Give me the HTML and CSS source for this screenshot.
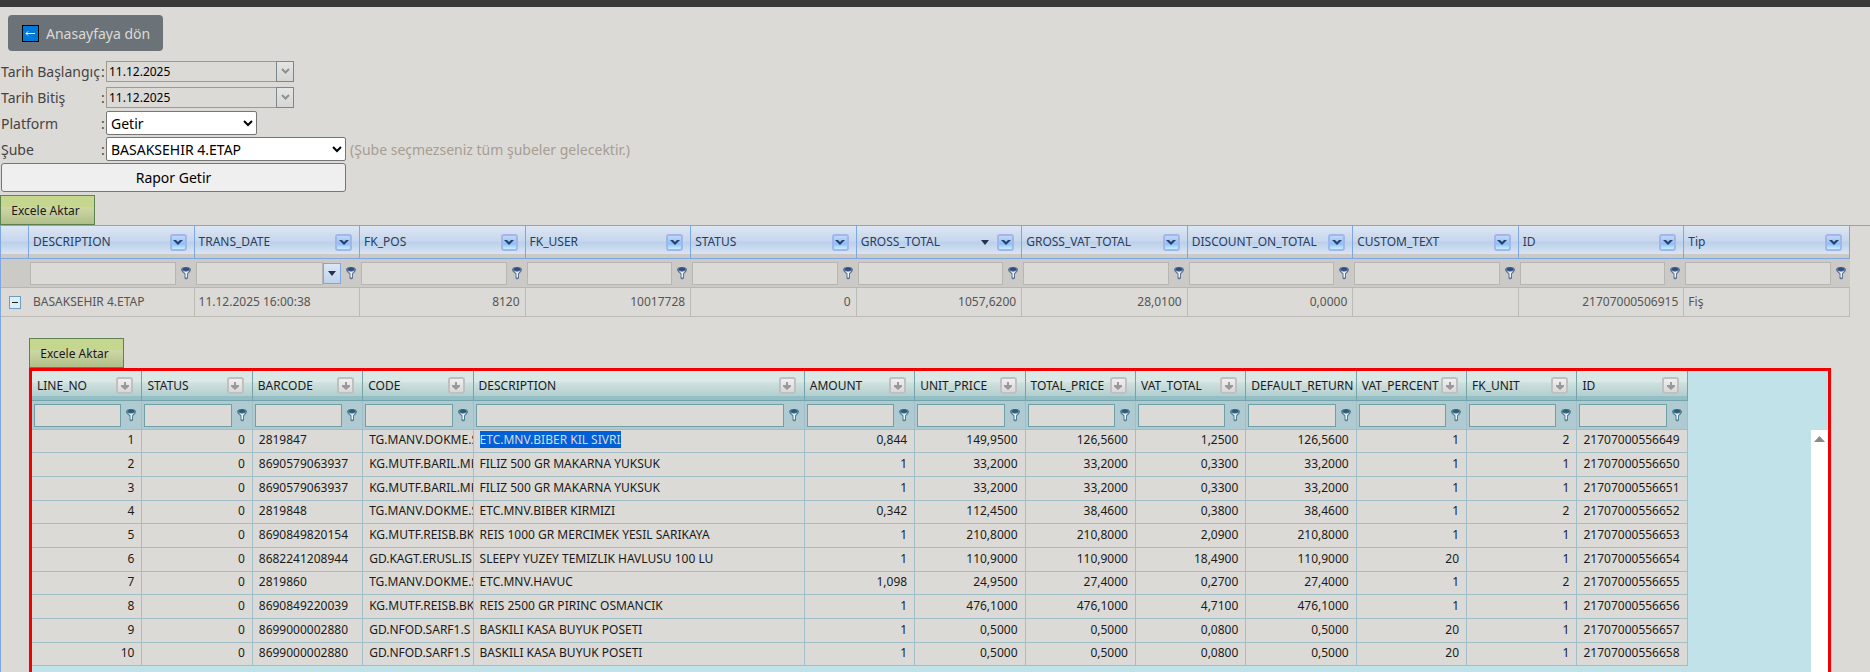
FILE: index.html
```html
<!DOCTYPE html>
<html lang="tr">
<head>
    <meta charset="UTF-8">
    <meta name="viewport" content="width=device-width, initial-scale=1.0">
    <title>Rapor</title>
    <link rel="stylesheet" href="styles.css">
</head>
<body>
    <svg class="symbols" aria-hidden="true">
        <symbol id="filter" viewBox="0 0 12 14">
            <path d="M1 3.500 C1 .2 11 .2 11 3.500 C11 6 8 7 8 8.500 V12.500 L6 13.500 L4.500 12.500 V8.500 C4.500 7 1 6 1 3.500Z" fill="currentColor" opacity=".7"/>
            <path d="M2.500 4.500 C4 6 8 6 9.500 4.500 L7 7.500 V11.500 H5.500 V7.500Z" fill="#e8f2fa"/>
            <ellipse cx="6" cy="3" rx="3" ry="1.800" fill="currentColor"/>
        </symbol>
        <symbol id="chevron" viewBox="0 0 10 7">
            <path d="M0 1 H3 L5 3 L7 1 H10 L5 6Z" fill="currentColor"/>
        </symbol>
        <symbol id="arrow" viewBox="0 0 10 10">
            <path d="M4 1 H6 V4 H9 V5.500 L5 9 L1 5.500 V4 H4Z" fill="currentColor"/>
        </symbol>
    </svg>
    <div class="topbar"></div>
    <a class="btn-home" href="#">
        <svg width="17" height="17" viewBox="0 0 17 17"><rect x=".5" y=".5" width="16" height="16" fill="#0078d7" stroke="#000"/><path d="M4 8.500H13M6 6.500L4 8.500L6 10.500" fill="none" stroke="#fff"/></svg>
        Anasayfaya dön
    </a>
    <form class="filters">
        <label for="start">Tarih Başlangıç</label><span>:</span>
        <div class="date-edit">
            <input type="text" id="start" value="11.12.2025">
            <button type="button" aria-label="Tarih seç"><svg width="9" height="6"><path d="M1 1L4.500 4.500L8 1" fill="none" stroke="#8f8f8f" stroke-width="2"/></svg></button>
        </div>
        <label for="end">Tarih Bitiş</label><span>:</span>
        <div class="date-edit">
            <input type="text" id="end" value="11.12.2025">
            <button type="button" aria-label="Tarih seç"><svg width="9" height="6"><path d="M1 1L4.500 4.500L8 1" fill="none" stroke="#8f8f8f" stroke-width="2"/></svg></button>
        </div>
        <label for="platform">Platform</label><span>:</span>
        <div><select id="platform" class="platform"><option>Getir</option></select></div>
        <label for="branch">Şube</label><span>:</span>
        <div class="branch-row">
            <select id="branch" class="branch"><option>BASAKSEHIR 4.ETAP</option></select>
            <span class="hint">(Şube seçmezseniz tüm şubeler gelecektir.)</span>
        </div>
        <button type="button" class="btn-report">Rapor Getir</button>
    </form>
    <button type="button" class="btn-excel">Excele Aktar</button>
    <div class="master">
        <table class="grid master-grid">
            <thead id="masterHead"></thead>
            <tbody id="masterBody"></tbody>
        </table>
        <div class="detail">
            <button type="button" class="btn-excel">Excele Aktar</button>
            <div class="detail-box">
                <table class="grid detail-grid">
                    <thead id="detailHead"></thead>
                    <tbody id="detailBody"></tbody>
                </table>
                <div class="scroll"><svg width="11" height="6"><path d="M0 6L5.500 0L11 6Z" fill="#8a8a8a"/></svg></div>
            </div>
        </div>
    </div>
    <script src="script.js"></script>
</body>
</html>
```
FILE: styles.css
```css
*{box-sizing:border-box;}
body{display:flex;flex-direction:column;margin:0;min-height:100vh;background:#dcdad6;color:#444;font-family:"Noto Sans","Open Sans",sans-serif;font-size:14px;}
button,input,select{font-family:inherit;margin:0;}
.symbols{display:none;}
.topbar{height:7px;background:#3b3a3a;}
.btn-home{display:flex;align-items:center;gap:7px;width:max-content;height:36px;margin:8px 8px 7px;padding:0 13px 0 14px;border-radius:4px;background:#6c7378;color:#dcdad6;font-size:14px;text-decoration:none;}

.filters{display:grid;grid-template-columns:101px 5px auto;grid-auto-rows:26px;align-items:center;}
.filters label{padding-left:1px;white-space:nowrap;}
.date-edit{display:flex;width:188px;height:21px;border:1px solid #9f9990;}
.date-edit input{flex:1;min-width:0;padding:0 2px;border:0;background:none;color:#000;font-size:12px;}
.date-edit button{width:18px;margin:-1px;padding:0;border:1px solid #7c878d;background:linear-gradient(#e4e4e2,#d6d6d4);line-height:0;}
.filters select{height:24px;padding:0;border:1px solid #767676;border-radius:2px;background:#fff;color:#000;font-size:14px;}
.platform{width:151px;}
.branch{width:240px;}
.branch-row{display:flex;align-items:center;gap:4px;}
.hint{color:#a69d93;}
.btn-report{grid-column:1/4;width:345px;height:29px;margin:5px 0 0 1px;border:1px solid #767676;border-radius:3px;background:#efefef;color:#000;font-size:14px;}
.btn-excel{flex:none;display:block;width:95px;height:30px;padding:0 4px 0 0;border:1px solid #5f8350;background:linear-gradient(#c5d78f 40%,#cdd7a5 41%,#b0bf8a);color:#1a1a1a;font-size:12px;}
.filters + .btn-excel{margin-top:7px;}

.master{flex:1;display:flex;flex-direction:column;border-left:1px solid #7ea6e0;border-top:1px solid #7ea6e0;}
.grid{table-layout:fixed;border-collapse:separate;border-spacing:0;font-size:12px;line-height:16px;}
.grid th,.grid td{padding:0;overflow:hidden;white-space:nowrap;font-weight:normal;text-align:left;}
.grid .num{text-align:right;}
.head{display:flex;align-items:center;}
.head span{flex:1;}
.head button{flex:none;width:17px;height:17px;padding:0;border-radius:3px;line-height:0;}
.filter{display:flex;align-items:center;}
.filter input{flex:1;min-width:0;height:23px;padding:0 2px;background:#dcdad6;}
.filter button{padding:0;border:0;background:none;color:inherit;line-height:0;}

.master-grid{width:calc(100% - 20px);color:#555;}
.master-grid th{height:33px;border-right:1px solid #7ea6e0;border-bottom:1px solid #7ea6e0;background:linear-gradient(#dde6f3,#c6d6ed 48%,#b9cfea 50%,#d9e4f3 86%,#cccac6 87%);color:#2b3c5c;}
.master-grid th .head{padding:0 7px 0 4px;}
.master-grid .head button{border:2px solid #a3b6ea;background:linear-gradient(#c3d8f8,#8fbdf8 60%,#c8f0ff);color:#26436e;}
.master-grid .sorted{margin-right:8px;}
.master-grid .filters-row td{height:29px;border-bottom:1px solid #b8b6b0;background:#cccac6;}
.master-grid .filter{padding:0 3px 0 1px;gap:4px;color:#2f4e80;}
.master-grid .filter input{border:1px solid #b8b6b0;}
.master-grid .filter .pick{width:18px;height:21px;margin-left:-4px;border:1px solid #7ea6e0;background:linear-gradient(#dce6f4,#c0d3ec);}
.master-grid .row td{height:29px;padding:0 5px 0 4px;border-right:1px solid #bdbbb6;border-bottom:1px solid #bdbbb6;}
.master-grid .row td:first-child{border-right:0;}
.master-grid .first{width:28px;}
.expand{display:grid;place-items:center;width:12px;height:13px;margin-left:4px;padding:0;border:1px solid #6f9cc4;background:#dceefa;line-height:0;}

.detail{flex:1;display:flex;flex-direction:column;padding:21px 39px 0 28px;}
.detail-box{flex:1;display:flex;align-items:flex-start;border:3px solid #f00000;border-bottom:0;background:#c1e2e8;}
.detail-grid{flex:1;width:0;margin-right:123px;color:#1a1a1a;}
.detail-grid th{height:30px;border-right:1px solid #74a3aa;border-bottom:1px solid #74a3aa;background:linear-gradient(#dae8e6 38%,#cfe1df 40%,#b3cfcf 85%,#94bfc5 86%);}
.detail-grid .wide{width:20%;}
.detail-grid .head{padding:0 8px 0 5px;}
.detail-grid .head button{border:2px solid #c0c0c0;background:linear-gradient(#f0f0f0,#d8d8d8);color:#999;}
.detail-grid .filters-row td{height:29px;border-right:1px solid #a0bfc8;border-bottom:1px solid #a0bfc8;background:#afcbd1;}
.detail-grid .filter{padding:0 4px 0 2px;gap:4px;color:#2b5d78;}
.detail-grid .filter input{border:1px solid #6fa0a8;}
.detail-grid .row td{height:24px;padding:0 7px 2px 6px;border-right:1px solid #a0bfc8;border-bottom:1px solid #a0bfc8;background:#dcdad6;line-height:14px;text-overflow:clip;}
.detail-grid .row:nth-child(3n+1) td{height:23px;}
.detail-grid .row .code,.detail-grid .row .id{padding-right:0;}
.detail-grid mark{background:#0060d8;color:#dcdad6;}
.scroll{align-self:stretch;width:17px;margin-top:59px;padding-top:6px;background:#fff;line-height:0;text-align:center;}
```
FILE: script.js
```js
const masterCols = ['DESCRIPTION', 'TRANS_DATE', 'FK_POS', 'FK_USER', 'STATUS', 'GROSS_TOTAL', 'GROSS_VAT_TOTAL', 'DISCOUNT_ON_TOTAL', 'CUSTOM_TEXT', 'ID', 'Tip'];
const masterRow = ['BASAKSEHIR 4.ETAP', '11.12.2025 16:00:38', '8120', '10017728', '0', '1057,6200', '28,0100', '0,0000', '', '21707000506915', 'Fiş'];
const detailCols = ['LINE_NO', 'STATUS', 'BARCODE', 'CODE', 'DESCRIPTION', 'AMOUNT', 'UNIT_PRICE', 'TOTAL_PRICE', 'VAT_TOTAL', 'DEFAULT_RETURN', 'VAT_PERCENT', 'FK_UNIT', 'ID'];
const detailRows = [
    ['1', '0', '2819847', 'TG.MANV.DOKME.S', 'ETC.MNV.BIBER KIL SIVRI', '0,844', '149,9500', '126,5600', '1,2500', '126,5600', '1', '2', '21707000556649'],
    ['2', '0', '8690579063937', 'KG.MUTF.BARIL.MK', 'FILIZ 500 GR MAKARNA YUKSUK', '1', '33,2000', '33,2000', '0,3300', '33,2000', '1', '1', '21707000556650'],
    ['3', '0', '8690579063937', 'KG.MUTF.BARIL.MK', 'FILIZ 500 GR MAKARNA YUKSUK', '1', '33,2000', '33,2000', '0,3300', '33,2000', '1', '1', '21707000556651'],
    ['4', '0', '2819848', 'TG.MANV.DOKME.S', 'ETC.MNV.BIBER KIRMIZI', '0,342', '112,4500', '38,4600', '0,3800', '38,4600', '1', '2', '21707000556652'],
    ['5', '0', '8690849820154', 'KG.MUTF.REISB.BK', 'REIS 1000 GR MERCIMEK YESIL SARIKAYA', '1', '210,8000', '210,8000', '2,0900', '210,8000', '1', '1', '21707000556653'],
    ['6', '0', '8682241208944', 'GD.KAGT.ERUSL.IS', 'SLEEPY YUZEY TEMIZLIK HAVLUSU 100 LU', '1', '110,9000', '110,9000', '18,4900', '110,9000', '20', '1', '21707000556654'],
    ['7', '0', '2819860', 'TG.MANV.DOKME.S', 'ETC.MNV.HAVUC', '1,098', '24,9500', '27,4000', '0,2700', '27,4000', '1', '2', '21707000556655'],
    ['8', '0', '8690849220039', 'KG.MUTF.REISB.BK', 'REIS 2500 GR PIRINC OSMANCIK', '1', '476,1000', '476,1000', '4,7100', '476,1000', '1', '1', '21707000556656'],
    ['9', '0', '8699000002880', 'GD.NFOD.SARF1.S', 'BASKILI KASA BUYUK POSETI', '1', '0,5000', '0,5000', '0,0800', '0,5000', '20', '1', '21707000556657'],
    ['10', '0', '8699000002880', 'GD.NFOD.SARF1.S', 'BASKILI KASA BUYUK POSETI', '1', '0,5000', '0,5000', '0,0800', '0,5000', '20', '1', '21707000556658']
];

const icon = (name, w, h) => `<svg width="${w}" height="${h}"><use href="#${name}"/></svg>`;
const triangle = '<svg class="sorted" width="8" height="5"><path d="M0 0H8L4 5Z" fill="#26324a"/></svg>';

function headCell(col, symbol, h) {
    const sorted = col === 'GROSS_TOTAL' ? triangle : '';
    const menu = col === 'DEFAULT_RETURN' ? '' : `<button type="button" aria-label="${col} menü">${icon(symbol, 10, h)}</button>`;
    return `<div class="head"><span>${col}</span>${sorted}${menu}</div>`;
}

function filterCell(col) {
    const pick = col === 'TRANS_DATE' ? '<button type="button" class="pick" aria-label="Tarih seç"><svg width="8" height="5"><path d="M0 0H8L4 5Z" fill="#26324a"/></svg></button>' : '';
    return `<td><div class="filter"><input type="text" aria-label="${col} filtre">${pick}<button type="button" aria-label="${col} filtrele">${icon('filter', 12, 14)}</button></div></td>`;
}

document.getElementById('masterHead').innerHTML =
    '<tr><th class="first"></th>' + masterCols.map(c => `<th>${headCell(c, 'chevron', 7)}</th>`).join('') + '</tr>' +
    '<tr class="filters-row"><td></td>' + masterCols.map(filterCell).join('') + '</tr>';

document.getElementById('masterBody').innerHTML =
    '<tr class="row"><td><button type="button" class="expand" aria-label="Daralt"><svg width="6" height="1"><rect width="6" height="1" fill="#222"/></svg></button></td>' +
    masterRow.map((v, i) => `<td class="${i > 1 && i < 10 ? 'num' : ''}">${v}</td>`).join('') + '</tr>';

document.getElementById('detailHead').innerHTML =
    '<tr>' + detailCols.map(c => `<th class="${c === 'DESCRIPTION' ? 'wide' : ''}">${headCell(c, 'arrow', 10)}</th>`).join('') + '</tr>' +
    '<tr class="filters-row">' + detailCols.map(filterCell).join('') + '</tr>';

const textCols = { 2: 'barcode', 3: 'code', 4: 'desc', 12: 'id' };
document.getElementById('detailBody').innerHTML = detailRows.map((row, r) =>
    '<tr class="row">' + row.map((v, i) => `<td class="${textCols[i] || 'num'}">${r === 0 && i === 4 ? `<mark>${v}</mark>` : v}</td>`).join('') + '</tr>'
).join('');
```
